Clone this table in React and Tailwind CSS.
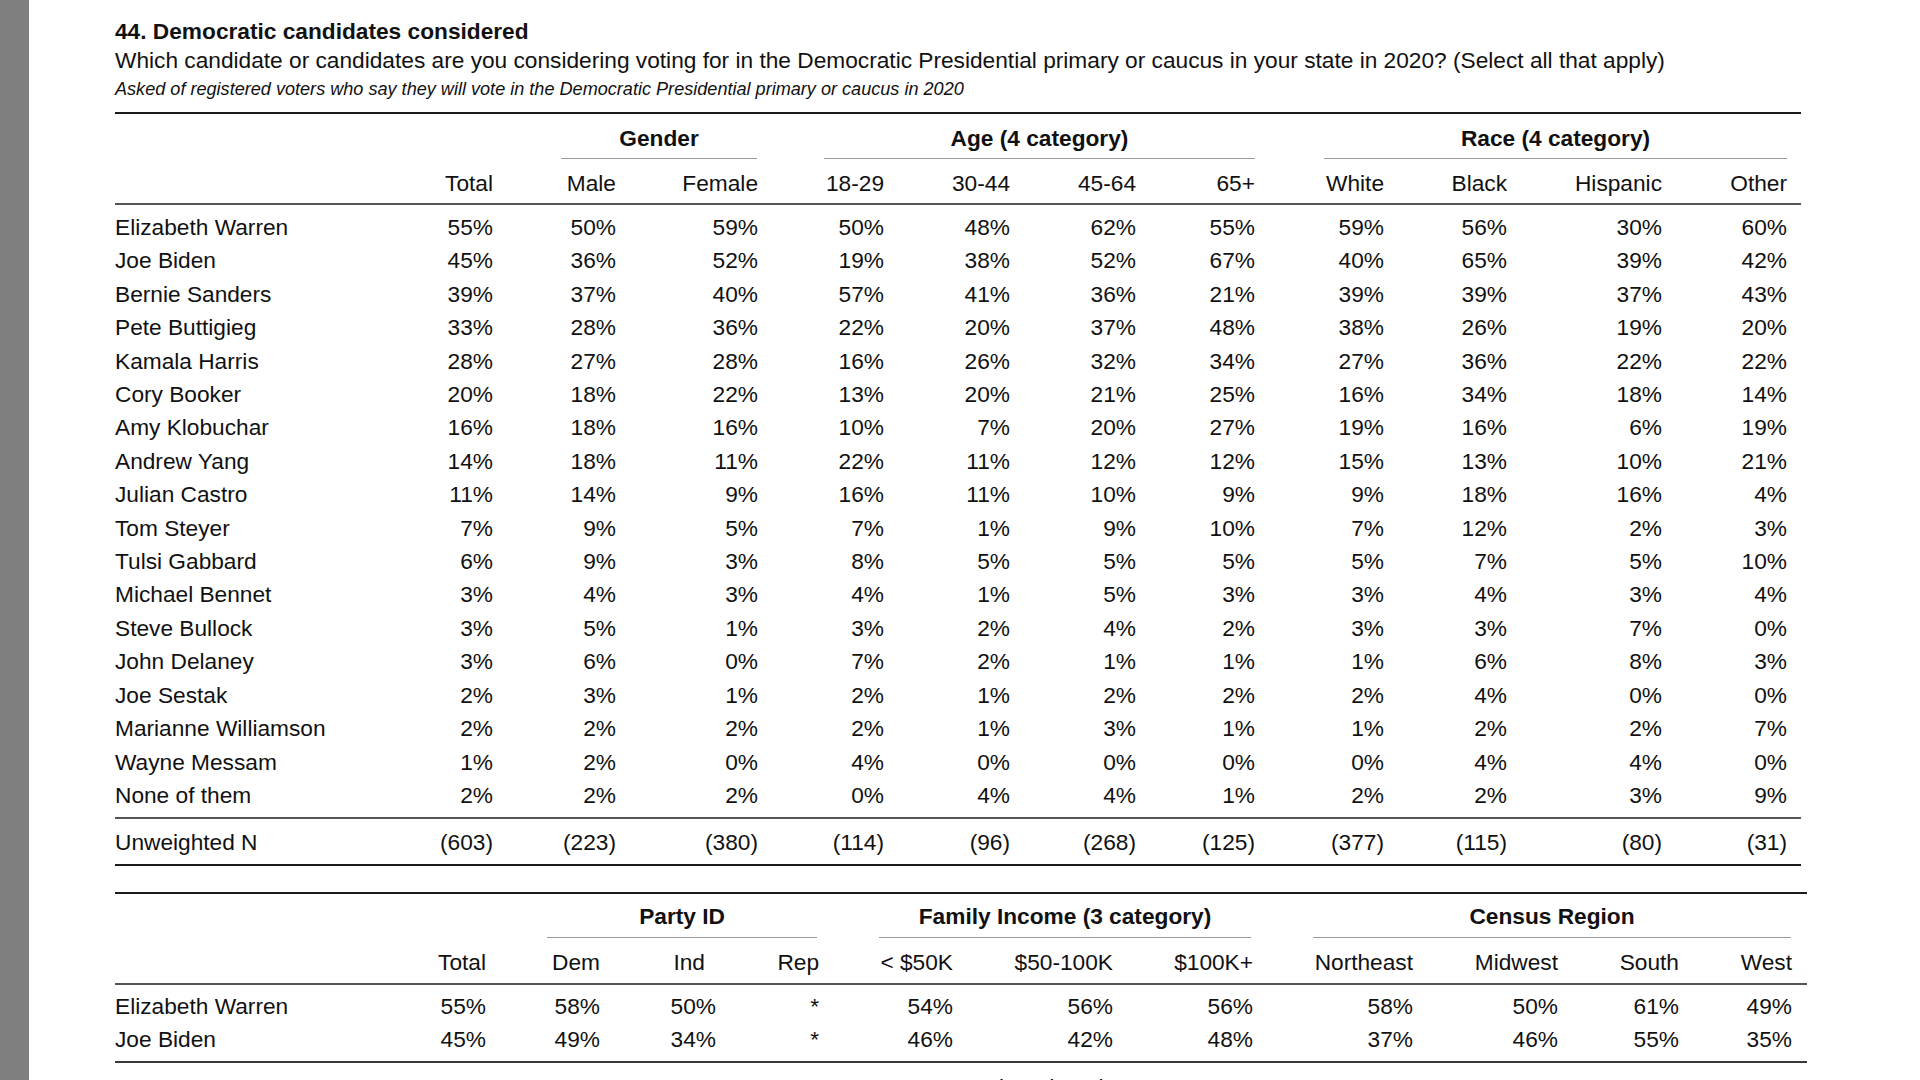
import clsx from 'clsx'

const cn = clsx

const T1_COLS = 'grid grid-cols-[255px_123px_123px_142px_126px_126px_126px_119px_129px_123px_155px_125px_14px]'
const T2_COLS = 'grid grid-cols-[255px_116px_114px_116px_103px_134px_160px_140px_160px_145px_121px_113px_15px]'

const table1 = {
  cols: T1_COLS,
  width: 'w-[1686px]',
  groupPad: 'pt-[10px]',
  underPad: 'pb-[5px]',
  headPad: 'pb-[5px]',
  rowsPad: 'pt-[6px] pb-[5px]',
  groups: [
    { label: 'Gender', span: 'col-start-3 col-span-2', ml: 'ml-[68px] mr-[1px]' },
    { label: 'Age (4 category)', span: 'col-start-5 col-span-4', ml: 'ml-[66px]' },
    { label: 'Race (4 category)', span: 'col-start-9 col-span-4', ml: 'ml-[69px]' },
  ],
  headers: ['Total', 'Male', 'Female', '18-29', '30-44', '45-64', '65+', 'White', 'Black', 'Hispanic', 'Other'],
  rows: [
    ['Elizabeth Warren', 55, 50, 59, 50, 48, 62, 55, 59, 56, 30, 60],
    ['Joe Biden', 45, 36, 52, 19, 38, 52, 67, 40, 65, 39, 42],
    ['Bernie Sanders', 39, 37, 40, 57, 41, 36, 21, 39, 39, 37, 43],
    ['Pete Buttigieg', 33, 28, 36, 22, 20, 37, 48, 38, 26, 19, 20],
    ['Kamala Harris', 28, 27, 28, 16, 26, 32, 34, 27, 36, 22, 22],
    ['Cory Booker', 20, 18, 22, 13, 20, 21, 25, 16, 34, 18, 14],
    ['Amy Klobuchar', 16, 18, 16, 10, 7, 20, 27, 19, 16, 6, 19],
    ['Andrew Yang', 14, 18, 11, 22, 11, 12, 12, 15, 13, 10, 21],
    ['Julian Castro', 11, 14, 9, 16, 11, 10, 9, 9, 18, 16, 4],
    ['Tom Steyer', 7, 9, 5, 7, 1, 9, 10, 7, 12, 2, 3],
    ['Tulsi Gabbard', 6, 9, 3, 8, 5, 5, 5, 5, 7, 5, 10],
    ['Michael Bennet', 3, 4, 3, 4, 1, 5, 3, 3, 4, 3, 4],
    ['Steve Bullock', 3, 5, 1, 3, 2, 4, 2, 3, 3, 7, 0],
    ['John Delaney', 3, 6, 0, 7, 2, 1, 1, 1, 6, 8, 3],
    ['Joe Sestak', 2, 3, 1, 2, 1, 2, 2, 2, 4, 0, 0],
    ['Marianne Williamson', 2, 2, 2, 2, 1, 3, 1, 1, 2, 2, 7],
    ['Wayne Messam', 1, 2, 0, 4, 0, 0, 0, 0, 4, 4, 0],
    ['None of them', 2, 2, 2, 0, 4, 4, 1, 2, 2, 3, 9],
  ],
  unweighted: ['(603)', '(223)', '(380)', '(114)', '(96)', '(268)', '(125)', '(377)', '(115)', '(80)', '(31)'],
}

const table2 = {
  cols: T2_COLS,
  width: 'w-[1692px]',
  groupPad: 'pt-[8px]',
  underPad: 'pb-[6px]',
  headPad: 'pb-[6px]',
  rowsPad: 'pt-[5px] pb-[4px]',
  groups: [
    { label: 'Party ID', span: 'col-start-3 col-span-3', ml: 'ml-[61px] mr-[2px]' },
    { label: 'Family Income (3 category)', span: 'col-start-6 col-span-3', ml: 'ml-[60px] mr-[2px]' },
    { label: 'Census Region', span: 'col-start-9 col-span-4', ml: 'ml-[60px] mr-[1px]' },
  ],
  headers: ['Total', 'Dem', 'Ind', 'Rep', '< $50K', '$50-100K', '$100K+', 'Northeast', 'Midwest', 'South', 'West'],
  headerPad: { 2: 'pr-[11px]' },
  rows: [
    ['Elizabeth Warren', 55, 58, 50, '*', 54, 56, 56, 58, 50, 61, 49],
    ['Joe Biden', 45, 49, 34, '*', 46, 42, 48, 37, 46, 55, 35],
  ],
}

function fmt(v) {
  return typeof v === 'number' ? `${v}%` : v
}

function CrossTab({ t }) {
  return (
    <div className={cn('border-t-2 border-[#1c1c1c]', t.width)}>
      {/* banner groups with their rule underneath */}
      <div className={cn(t.cols, t.groupPad, 'leading-[29px]')}>
        {t.groups.map(g => (
          <div key={g.label} className={g.span}>
            <div className={cn('border-b border-[#9a9a9a] text-center font-bold whitespace-nowrap', t.underPad, g.ml)}>
              {g.label}
            </div>
          </div>
        ))}
      </div>

      <div className={cn(t.cols, 'mt-[10px] leading-[29px] border-b-2 border-[#555]', t.headPad)}>
        <div />
        {t.headers.map((h, i) => (
          <div key={h} className={cn('text-right whitespace-nowrap', t.headerPad?.[i])}>{h}</div>
        ))}
      </div>

      <div className={cn(t.rowsPad, t.unweighted ? 'border-b-2 border-[#555]' : 'border-b-2 border-[#3a3a3a]')}>
        {t.rows.map(r => (
          <div key={r[0]} className={cn(t.cols, 'leading-[33.4px]')}>
            <div className="whitespace-nowrap">{r[0]}</div>
            {r.slice(1).map((v, i) => (
              <div key={i} className="text-right whitespace-nowrap">{fmt(v)}</div>
            ))}
          </div>
        ))}
      </div>

      {t.unweighted && (
        <div className={cn(t.cols, 'pt-[7px] pb-[4px] leading-[33.4px] border-b-2 border-[#1c1c1c]')}>
          <div>Unweighted N</div>
          {t.unweighted.map((v, i) => (
            <div key={i} className="text-right whitespace-nowrap">{v}</div>
          ))}
        </div>
      )}
    </div>
  )
}

export default function App() {
  return (
    <div className="flex h-[1080px] w-[1920px] overflow-hidden bg-white font-['Liberation_Sans',Arial,Helvetica,sans-serif] text-[22.7px] text-[#111]">
      <div className="w-[29px] shrink-0 bg-[#7f7f7f]" />
      <div className="pl-[86px] pt-[17px]">
        <h1 className="font-bold leading-[29px] whitespace-nowrap">44. Democratic candidates considered</h1>
        <p className="leading-[29px] whitespace-nowrap">
          Which candidate or candidates are you considering voting for in the Democratic Presidential primary or caucus in your state in 2020? (Select all that apply)
        </p>
        <p className="text-[18.1px] italic leading-[29px] whitespace-nowrap">
          Asked of registered voters who say they will vote in the Democratic Presidential primary or caucus in 2020
        </p>

        <div className="mt-[8px]">
          <CrossTab t={table1} />
        </div>

        <div className="mt-[26px]">
          <CrossTab t={table2} />
        </div>

        <p className="mt-[10px] pl-[841px] leading-[29px] whitespace-nowrap">continued on the next page</p>
      </div>
    </div>
  )
}
